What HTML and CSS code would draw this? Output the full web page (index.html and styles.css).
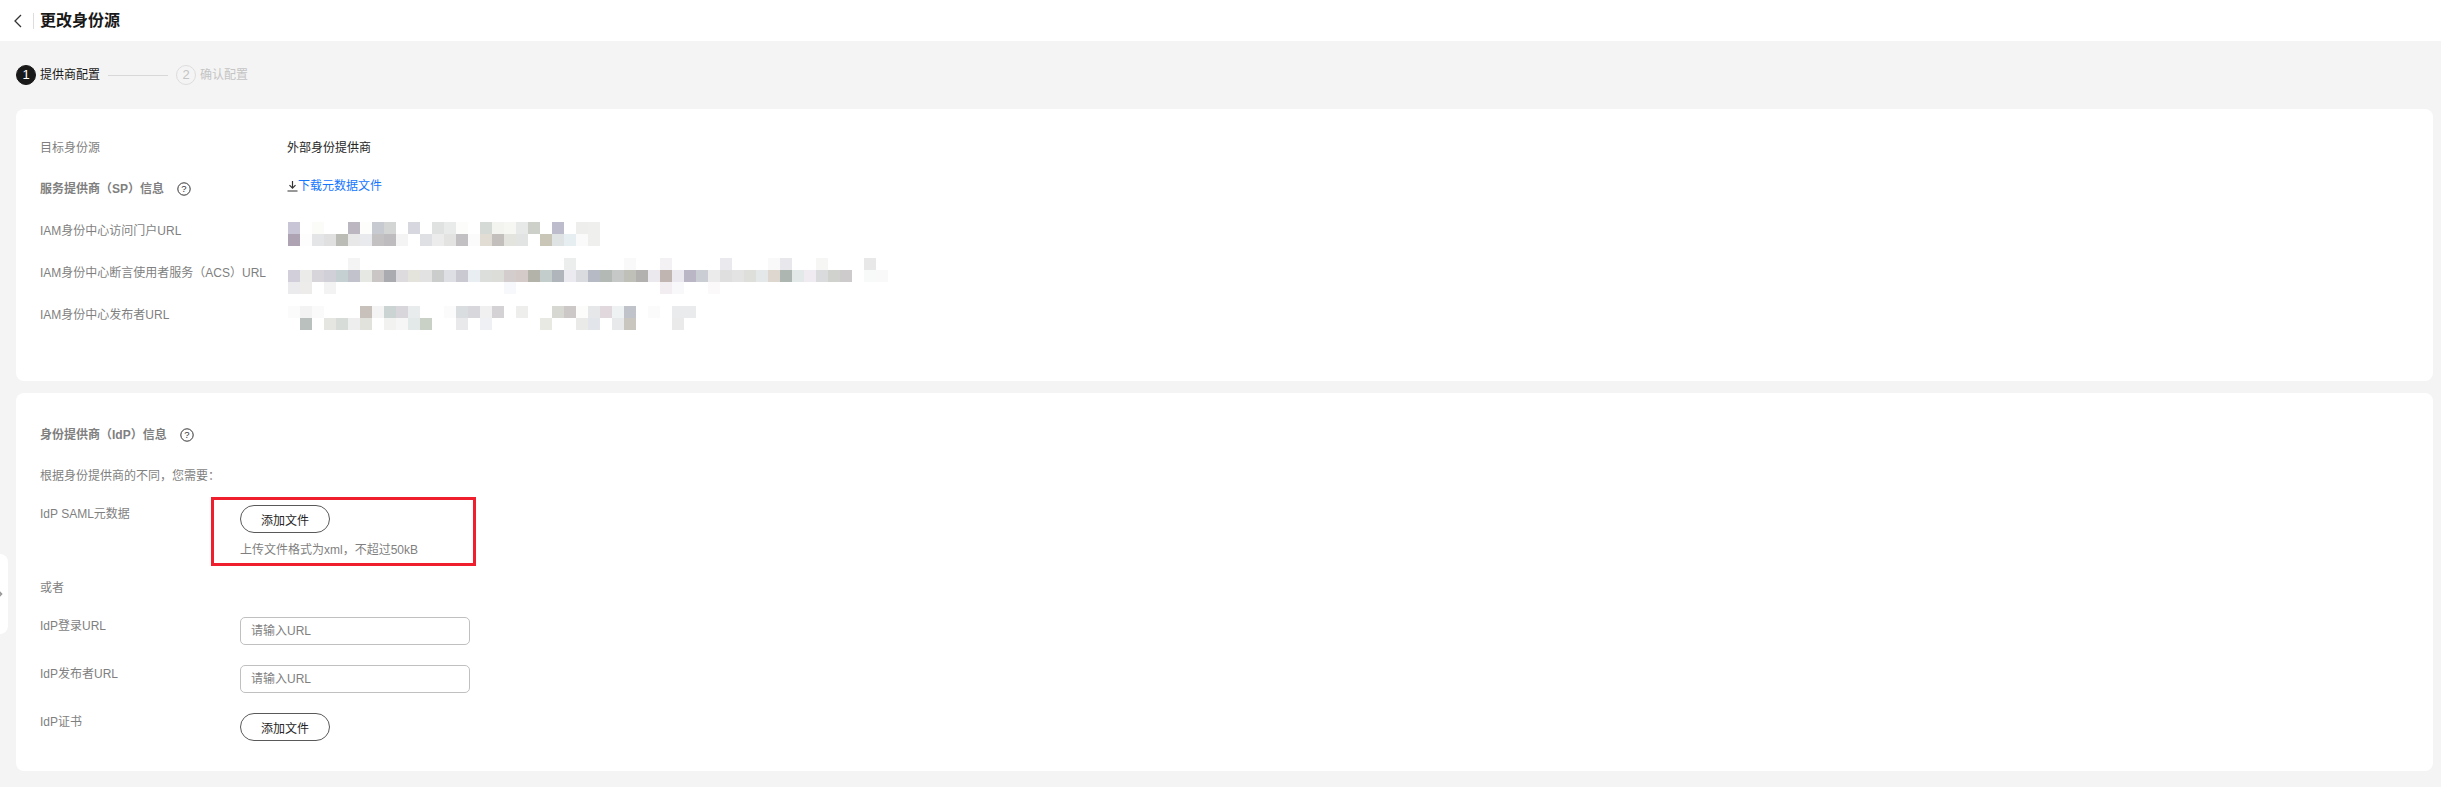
FILE: index.html
```html
<!DOCTYPE html>
<html lang="zh-CN">
<head>
    <meta charset="UTF-8">
    <title>更改身份源</title>
    <link rel="stylesheet" href="styles.css">
</head>
<body>
<header class="top-bar">
    <svg class="back-icon" width="12" height="16" viewBox="0 0 12 16"><path d="M9 2 3 8l6 6" fill="none" stroke="#333" stroke-width="1.3"/></svg>
    <span class="top-divider"></span>
    <h1 class="page-title">更改身份源</h1>
</header>

<div class="steps">
    <span class="step-num active">1</span>
    <span class="step-text active">提供商配置</span>
    <span class="step-line"></span>
    <span class="step-num">2</span>
    <span class="step-text">确认配置</span>
</div>

<section class="card card-sp">
    <div class="row row-first">
        <div class="row-label">目标身份源</div>
        <div class="row-value">外部身份提供商</div>
    </div>
    <div class="row">
        <div class="row-label strong">服务提供商（SP）信息
            <svg class="help-icon" width="14" height="14" viewBox="0 0 14 14"><circle cx="7" cy="7" r="6.2" fill="none" stroke="#333" stroke-width="1"/><text x="7" y="10.2" text-anchor="middle" class="help-mark">?</text></svg>
        </div>
        <div class="row-value link-wrap">
            <svg width="11" height="11" viewBox="0 0 11 11"><path d="M5.5 0v7M2.5 4.2l3 3 3-3M.5 10h10" fill="none" stroke="#333" stroke-width="1.2"/></svg>
            <a class="link">下载元数据文件</a>
        </div>
    </div>
    <div class="row">
        <div class="row-label">IAM身份中心访问门户URL</div>
        <svg class="mosaic" width="312" height="24">
            <rect x="0" fill="#c8c6d6"/><rect x="24" fill="#fbfbf8"/><rect x="60" fill="#bbb6c0"/><rect x="72" fill="#fdfdfb"/><rect x="84" fill="#c8cad2"/><rect x="96" fill="#d2d5d3"/><rect x="120" fill="#d6d7df"/><rect x="144" fill="#e0e2e1"/><rect x="156" fill="#e9eaea"/><rect x="168" fill="#fcfcfa"/><rect x="192" fill="#d5dad6"/><rect x="204" fill="#f3f3f0"/><rect x="216" fill="#f6f7f2"/><rect x="228" fill="#e6e9e8"/><rect x="240" fill="#cdcfc9"/><rect x="264" fill="#bdbccc"/><rect x="288" fill="#eeeeec"/><rect x="300" fill="#efefee"/>
            <rect x="0" y="12" fill="#aea3b3"/><rect x="12" y="12" fill="#fdfdfd"/><rect x="24" y="12" fill="#e3e5e7"/><rect x="36" y="12" fill="#e0e0e0"/><rect x="48" y="12" fill="#bcbcb7"/><rect x="60" y="12" fill="#e8e8e8"/><rect x="72" y="12" fill="#e9eaee"/><rect x="84" y="12" fill="#c3c1c2"/><rect x="96" y="12" fill="#bebcbe"/><rect x="108" y="12" fill="#f4f4f4"/><rect x="132" y="12" fill="#dfe0e3"/><rect x="144" y="12" fill="#ececec"/><rect x="156" y="12" fill="#e3e3e2"/><rect x="168" y="12" fill="#c2c0c3"/><rect x="180" y="12" fill="#fbfbfb"/><rect x="192" y="12" fill="#e1ddd5"/><rect x="204" y="12" fill="#c3bfbc"/><rect x="216" y="12" fill="#e4e4de"/><rect x="228" y="12" fill="#e2e4e3"/><rect x="252" y="12" fill="#c9c5b7"/><rect x="264" y="12" fill="#e0e3e3"/><rect x="276" y="12" fill="#e6eef1"/><rect x="288" y="12" fill="#fafafa"/><rect x="300" y="12" fill="#efefed"/>
        </svg>
    </div>
    <div class="row">
        <div class="row-label">IAM身份中心断言使用者服务（ACS）URL</div>
        <svg class="mosaic mosaic-tall" width="600" height="36">
            <rect x="60" fill="#f4f4f4"/><rect x="276" fill="#eceeee"/><rect x="336" fill="#f9f9f9"/><rect x="372" fill="#f3f1f3"/><rect x="432" fill="#e9e9ee"/><rect x="480" fill="#f9f9f9"/><rect x="492" fill="#e8e8ec"/><rect x="528" fill="#f6f6f4"/><rect x="576" fill="#e8e8e8"/>
            <rect x="0" y="12" fill="#d2cfdb"/><rect x="12" y="12" fill="#ebebe9"/><rect x="24" y="12" fill="#d7d4da"/><rect x="36" y="12" fill="#d1d0d9"/><rect x="48" y="12" fill="#c5d0d3"/><rect x="60" y="12" fill="#c1c2cc"/><rect x="72" y="12" fill="#e6e8e4"/><rect x="84" y="12" fill="#c9c6c5"/><rect x="96" y="12" fill="#a9abb1"/><rect x="108" y="12" fill="#dddbde"/><rect x="120" y="12" fill="#e4e3dc"/><rect x="132" y="12" fill="#e2e2e2"/><rect x="144" y="12" fill="#cbcdcc"/><rect x="156" y="12" fill="#dddfe5"/><rect x="168" y="12" fill="#cac8d1"/><rect x="180" y="12" fill="#e9eef2"/><rect x="192" y="12" fill="#dcdedb"/><rect x="204" y="12" fill="#dcddd9"/><rect x="216" y="12" fill="#d3cecd"/><rect x="228" y="12" fill="#d4cbc9"/><rect x="240" y="12" fill="#b4b3aa"/><rect x="252" y="12" fill="#c3cdcc"/><rect x="264" y="12" fill="#afb5ba"/><rect x="276" y="12" fill="#ebeaf0"/><rect x="288" y="12" fill="#d9dbdf"/><rect x="300" y="12" fill="#b6bac5"/><rect x="312" y="12" fill="#b3bab5"/><rect x="324" y="12" fill="#c5c8c6"/><rect x="336" y="12" fill="#bfc0b8"/><rect x="348" y="12" fill="#b3b1b0"/><rect x="360" y="12" fill="#ece9ee"/><rect x="372" y="12" fill="#c0b5b0"/><rect x="384" y="12" fill="#ebe8ef"/><rect x="396" y="12" fill="#bbb6c6"/><rect x="408" y="12" fill="#cacdd3"/><rect x="420" y="12" fill="#ebebeb"/><rect x="432" y="12" fill="#dfdfe0"/><rect x="444" y="12" fill="#e3e3e3"/><rect x="456" y="12" fill="#dedfdb"/><rect x="468" y="12" fill="#e4e8e8"/><rect x="480" y="12" fill="#ded7d0"/><rect x="492" y="12" fill="#aeb6b2"/><rect x="504" y="12" fill="#e3e9e9"/><rect x="516" y="12" fill="#efebf0"/><rect x="528" y="12" fill="#d9dbdc"/><rect x="540" y="12" fill="#cfd2cd"/><rect x="552" y="12" fill="#cdcbcb"/><rect x="576" y="12" fill="#f8f9f9"/><rect x="588" y="12" fill="#f8f9f8"/>
            <rect x="0" y="24" fill="#ebebee"/><rect x="12" y="24" fill="#edecea"/><rect x="36" y="24" fill="#f3f3f3"/><rect x="216" y="24" fill="#f7f8fb"/><rect x="372" y="24" fill="#f1edf0"/><rect x="384" y="24" fill="#f8f8fa"/><rect x="420" y="24" fill="#fbf9f9"/>
        </svg>
    </div>
    <div class="row">
        <div class="row-label">IAM身份中心发布者URL</div>
        <svg class="mosaic" width="408" height="24">
            <rect x="0" fill="#fbfbfb"/><rect x="12" fill="#f3f3f3"/><rect x="24" fill="#fafafa"/><rect x="72" fill="#c8c0ba"/><rect x="84" fill="#f4f4f5"/><rect x="96" fill="#cbd4d3"/><rect x="108" fill="#d8d5db"/><rect x="120" fill="#e9ecec"/><rect x="156" fill="#fbfbfb"/><rect x="168" fill="#d9dddf"/><rect x="180" fill="#d8d7dc"/><rect x="192" fill="#f0f0f0"/><rect x="204" fill="#d5d2d5"/><rect x="228" fill="#eeeeec"/><rect x="264" fill="#d8d8d2"/><rect x="276" fill="#ccc8c8"/><rect x="288" fill="#fcfcfa"/><rect x="300" fill="#e6e7e8"/><rect x="312" fill="#e0d8dc"/><rect x="324" fill="#eff2f3"/><rect x="336" fill="#c0c3c9"/><rect x="360" fill="#fbfbfb"/><rect x="384" fill="#e9ebec"/><rect x="396" fill="#e9ebec"/>
            <rect x="12" y="12" fill="#b9c0bd"/><rect x="36" y="12" fill="#e5e6e1"/><rect x="48" y="12" fill="#d8dcd8"/><rect x="60" y="12" fill="#efeeef"/><rect x="72" y="12" fill="#e2e2dc"/><rect x="96" y="12" fill="#f2f2f1"/><rect x="108" y="12" fill="#f6f6f6"/><rect x="120" y="12" fill="#e3e9e9"/><rect x="132" y="12" fill="#c9d1c7"/><rect x="168" y="12" fill="#e9e9ec"/><rect x="192" y="12" fill="#eff0f3"/><rect x="252" y="12" fill="#e8e9e3"/><rect x="288" y="12" fill="#eaebe8"/><rect x="300" y="12" fill="#e2e6eb"/><rect x="324" y="12" fill="#e8e9ea"/><rect x="336" y="12" fill="#c9c5bf"/><rect x="384" y="12" fill="#eaeaea"/>
        </svg>
    </div>
</section>

<section class="card card-idp">
    <div class="idp-title strong">身份提供商（IdP）信息
        <svg class="help-icon" width="14" height="14" viewBox="0 0 14 14"><circle cx="7" cy="7" r="6.2" fill="none" stroke="#333" stroke-width="1"/><text x="7" y="10.2" text-anchor="middle" class="help-mark">?</text></svg>
    </div>
    <p class="idp-note">根据身份提供商的不同，您需要：</p>
    <div class="form-row saml-row">
        <div class="form-label">IdP SAML元数据</div>
        <div>
            <button class="file-btn" type="button">添加文件</button>
            <p class="hint">上传文件格式为xml，不超过50kB</p>
        </div>
        <span class="red-box"></span>
    </div>
    <p class="or-text">或者</p>
    <div class="form-row">
        <div class="form-label">IdP登录URL</div>
        <input class="url-input" type="text" placeholder="请输入URL">
    </div>
    <div class="form-row">
        <div class="form-label">IdP发布者URL</div>
        <input class="url-input" type="text" placeholder="请输入URL">
    </div>
    <div class="form-row">
        <div class="form-label">IdP证书</div>
        <button class="file-btn" type="button">添加文件</button>
    </div>
</section>

<div class="side-tab">
    <svg class="side-arrow" width="6" height="8" viewBox="0 0 6 8"><path d="M1.500 1 4.500 4 1.500 7" fill="none" stroke="#999" stroke-width="1.6"/></svg>
</div>
</body>
</html>
```

FILE: styles.css
```css
* {
    box-sizing: border-box;
}
html, body {
    margin: 0;
    height: 787px;
    overflow: hidden;
}
body {
    position: relative;
    font-family: "Liberation Sans", "Noto Sans CJK SC", sans-serif;
    font-size: 12px;
    line-height: 18px;
    color: #191919;
    background-color: #f4f4f4;
}
p {
    margin: 0;
}
.top-bar {
    display: flex;
    align-items: center;
    height: 41px;
    padding-left: 12px;
    background-color: #fff;
}
.back-icon {
    margin-right: 9px;
}
.top-divider {
    width: 1px;
    height: 16px;
    margin-right: 6px;
    background-color: #ddd;
}
.page-title {
    margin: 0;
    font-size: 16px;
    font-weight: bold;
    color: #191919;
}
.steps {
    display: flex;
    align-items: center;
    height: 20px;
    margin: 24px 0 24px 16px;
}
.step-num {
    width: 20px;
    height: 20px;
    margin-right: 4px;
    border: 1px solid #ddd;
    border-radius: 50%;
    font-size: 13px;
    line-height: 18px;
    text-align: center;
    color: #c4c4c4;
}
.step-num.active {
    border-color: #191919;
    background-color: #191919;
    color: #fff;
}
.step-text {
    color: #c4c4c4;
}
.step-text.active {
    color: #191919;
}
.step-line {
    width: 60px;
    height: 1px;
    margin: 0 8px;
    background-color: #d8d8d8;
}
.card {
    margin: 0 8px 12px 16px;
    padding-left: 24px;
    border-radius: 8px;
    background-color: #fff;
}
.card-sp {
    height: 272px;
    padding-top: 18px;
}
.card-idp {
    height: 378px;
    padding-top: 33px;
}
.row {
    display: flex;
    align-items: center;
    height: 42px;
}
.row-first {
    height: 41px;
}
.row-label {
    flex: none;
    width: 247px;
    color: #7f7f7f;
}
.strong {
    font-weight: bold;
    color: #808080;
}
.row-value {
    color: #252525;
}
.help-icon {
    margin-left: 10px;
    vertical-align: -3px;
}
.help-mark {
    font-size: 9.5px;
    font-weight: normal;
    fill: #333;
}
.link-wrap {
    display: flex;
    align-items: center;
    margin-top: -6px;
}
.link {
    color: #1476ff;
}
.mosaic {
    flex: none;
    margin-top: 6px;
    margin-left: 1px;
    shape-rendering: crispEdges;
}
.mosaic rect {
    width: 12px;
    height: 12px;
}
.idp-title {
    height: 18px;
}
.idp-note {
    margin-top: 23px;
    color: #7f7f7f;
}
.form-row {
    position: relative;
    display: flex;
    align-items: flex-start;
    margin-bottom: 20px;
    color: #7f7f7f;
}
.saml-row {
    margin-top: 20px;
    margin-bottom: 0;
}
.form-label {
    flex: none;
    width: 200px;
}
.file-btn {
    display: block;
    width: 90px;
    height: 28px;
    padding: 0;
    border: 1px solid #595959;
    border-radius: 14px;
    font-family: inherit;
    font-size: 12px;
    color: #252525;
    background-color: #fff;
}
.hint {
    margin-top: 8px;
    color: #7f7f7f;
}
.red-box {
    position: absolute;
    left: 171px;
    top: -8px;
    width: 265px;
    height: 69px;
    border: 3px solid #f01f2e;
}
.or-text {
    margin-top: 20px;
    margin-bottom: 20px;
    color: #7f7f7f;
}
.url-input {
    width: 230px;
    height: 28px;
    padding: 0 10px;
    border: 1px solid #c0c0c0;
    border-radius: 5px;
    font-family: inherit;
    font-size: 12px;
}
.url-input::placeholder {
    color: #7f7f7f;
}
.side-tab {
    position: absolute;
    left: 0;
    top: 554px;
    display: flex;
    align-items: center;
    width: 8px;
    height: 80px;
    border-radius: 0 8px 8px 0;
    background-color: #fff;
}
.side-arrow {
    margin-left: -3px;
}
```
